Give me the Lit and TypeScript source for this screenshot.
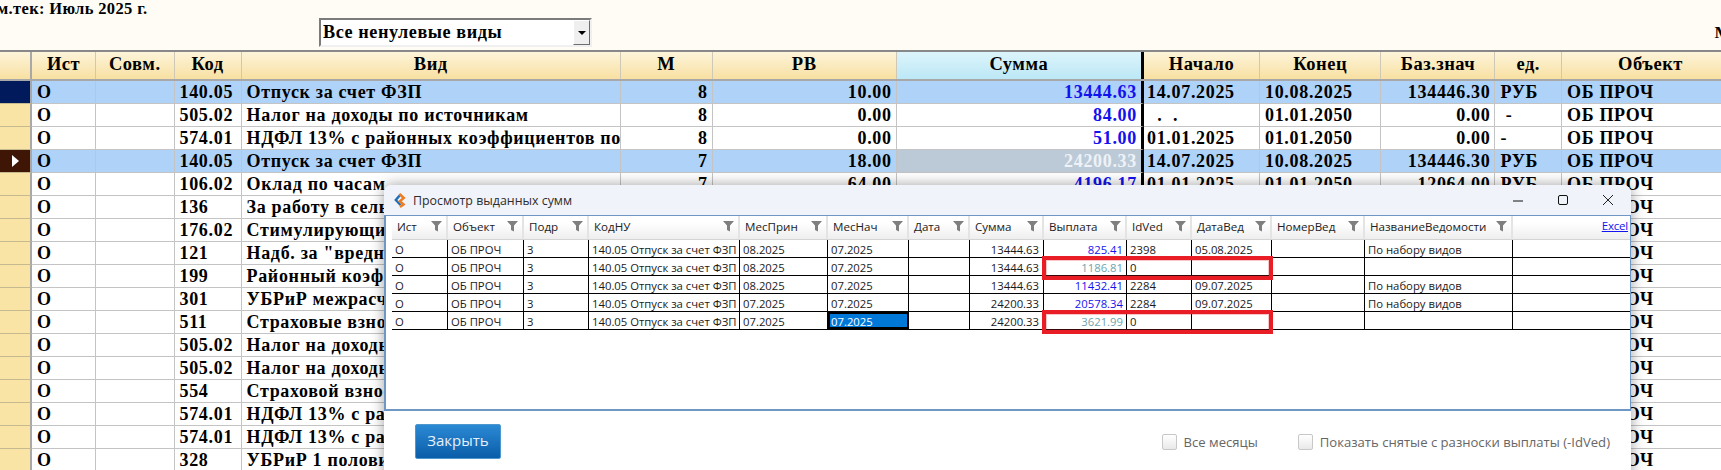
import { LitElement, html, css, svg } from "lit";
import { customElement } from "lit/decorators.js";

type MainRow = { ist: string; kod: string; vid: string; m: string; rv: string; sum: string; start: string; end: string; base: string; unit: string; obj: string; cls?: string; mark?: string };

const covered = (kod: string, vid: string): MainRow => ({
  ist: "О", kod, vid, m: "", rv: "", sum: "", start: "", end: "", base: "", unit: "", obj: "ОБ ПРОЧ",
});

const MAIN: MainRow[] = [
  { ist: "О", kod: "140.05", vid: "Отпуск за счет ФЗП", m: "8", rv: "10.00", sum: "13444.63", start: "14.07.2025", end: "10.08.2025", base: "134446.30", unit: "РУБ", obj: "ОБ ПРОЧ", cls: "sel", mark: "first" },
  { ist: "О", kod: "505.02", vid: "Налог на доходы по источникам", m: "8", rv: "0.00", sum: "84.00", start: "\u00a0\u00a0.\u00a0\u00a0.", end: "01.01.2050", base: "0.00", unit: "\u00a0-", obj: "ОБ ПРОЧ" },
  { ist: "О", kod: "574.01", vid: "НДФЛ 13% с районных коэффициентов по", m: "8", rv: "0.00", sum: "51.00", start: "01.01.2025", end: "01.01.2050", base: "0.00", unit: "-", obj: "ОБ ПРОЧ" },
  { ist: "О", kod: "140.05", vid: "Отпуск за счет ФЗП", m: "7", rv: "18.00", sum: "24200.33", start: "14.07.2025", end: "10.08.2025", base: "134446.30", unit: "РУБ", obj: "ОБ ПРОЧ", cls: "sel cur", mark: "cur" },
  { ist: "О", kod: "106.02", vid: "Оклад по часам", m: "7", rv: "64.00", sum: "4196.17", start: "01.01.2025", end: "01.01.2050", base: "12064.00", unit: "РУБ", obj: "ОБ ПРОЧ" },
  covered("136", "За работу в сель"),
  covered("176.02", "Стимулирующи"),
  covered("121", "Надб. за \"вредн"),
  covered("199", "Районный коэф"),
  covered("301", "УБРиР межрасч"),
  covered("511", "Страховые взно"),
  covered("505.02", "Налог на доходы"),
  covered("505.02", "Налог на доходы"),
  covered("554", "Страховой взнос"),
  covered("574.01", "НДФЛ 13% с рай"),
  covered("574.01", "НДФЛ 13% с рай"),
  covered("328", "УБРиР 1 полови"),
];

const HEAD = ["", "Ист", "Совм.", "Код", "Вид", "М", "РВ", "Сумма", "Начало", "Конец", "Баз.знач", "ед.", "Объект"];

const SUB_HEAD = ["Ист", "Объект", "Подр", "КодНУ", "МесПрин", "МесНач", "Дата", "Сумма", "Выплата", "IdVed", "ДатаВед", "НомерВед", "НазваниеВедомости", ""];

type SubRow = { pm: string; mn: string; sum: string; pay: string; grey?: boolean; id: string; date: string; name: string; active?: boolean };
const SUB: SubRow[] = [
  { pm: "08.2025", mn: "07.2025", sum: "13444.63", pay: "825.41", id: "2398", date: "05.08.2025", name: "По набору видов" },
  { pm: "08.2025", mn: "07.2025", sum: "13444.63", pay: "1186.81", grey: true, id: "0", date: "", name: "" },
  { pm: "08.2025", mn: "07.2025", sum: "13444.63", pay: "11432.41", id: "2284", date: "09.07.2025", name: "По набору видов" },
  { pm: "07.2025", mn: "07.2025", sum: "24200.33", pay: "20578.34", id: "2284", date: "09.07.2025", name: "По набору видов" },
  { pm: "07.2025", mn: "07.2025", sum: "24200.33", pay: "3621.99", grey: true, id: "0", date: "", name: "", active: true },
];

const funnel = svg`<path d="M0 0H11L7 4.5V10.5L4 9V4.5Z" fill="#7f7f7f"/>`;

@customElement("sub-grid")
class SubGrid extends LitElement {
  static styles = css`
    :host { display: block; font-family: "Open Sans", "Noto Sans", sans-serif; font-size: 11.3px; color: #1a1a1a; position: relative; }
    .line { display: grid; grid-template-columns: 56px 76px 65px 151px 88px 81px 61px 74px 83px 65px 80px 93px 148px 116px; }
    .head { height: 24px; background: linear-gradient(#ffffff 0 30%, #eeeeee 100%); border-bottom: 1px solid #d4d4d4; box-sizing: border-box; }
    .hc { display: flex; align-items: center; justify-content: space-between; padding: 0 4px 2px 5px; border-right: 2px solid #e4e4e4; font-size: 11.6px; color: #222; }
    .hc svg { width: 11px; height: 11px; flex: none; }
    .hc.blank { border-right: none; }
    .row { height: 18px; border-bottom: 1px solid #000; box-sizing: border-box; }
    .c { border-right: 1px solid #000; padding: 0 0 0 3px; line-height: 20px; white-space: nowrap; overflow: hidden; box-sizing: border-box; }
    .c:last-child { border-right: none; }
    .r { text-align: right; padding: 0 4px 0 0; }
    .pay { color: #1414ee; padding-right: 3px; }
    .pay.grey { color: #6da4ae; }
    .active { background: #0078d7; color: #fff; outline: 2px solid #000; outline-offset: -2px; }
  `;
  render() {
    return html`
      <div class="line head">
        ${SUB_HEAD.map((h) => h
          ? html`<div class="hc"><span>${h}</span><svg viewBox="0 0 11 11">${funnel}</svg></div>`
          : html`<div class="hc blank"></div>`)}
      </div>
      ${SUB.map((r) => html`
        <div class="line row">
          <div class="c">О</div><div class="c">ОБ ПРОЧ</div><div class="c">3</div>
          <div class="c">140.05 Отпуск за счет ФЗП</div>
          <div class="c">${r.pm}</div>
          <div class="c ${r.active ? "active" : ""}">${r.mn}</div>
          <div class="c"></div>
          <div class="c r">${r.sum}</div>
          <div class="c r pay ${r.grey ? "grey" : ""}">${r.pay}</div>
          <div class="c">${r.id}</div><div class="c">${r.date}</div><div class="c"></div>
          <div class="c">${r.name}</div><div class="c"></div>
        </div>`)}
    `;
  }
}

@customElement("app-root")
export class AppRoot extends LitElement {
  static styles = css`
    :host { display: block; width: 1721px; height: 470px; overflow: hidden; position: relative; background: #fffcf5; font-family: "Liberation Serif", "Times New Roman", serif; font-weight: bold; color: #000; }
    .top { height: 50px; box-sizing: border-box; display: grid; grid-template-rows: 18px 29px; }
    .period { font-size: 16.5px; line-height: 18px; margin-left: -3px; letter-spacing: 0.35px; }
    .tools { display: flex; align-items: center; justify-content: space-between; padding-left: 319px; white-space: nowrap; }
    .combo { width: 273px; height: 29px; box-sizing: border-box; border: 2px solid; border-color: #7b7b7b #f0f0f0 #f0f0f0 #7b7b7b; background: #fff; display: flex; align-items: stretch; justify-content: space-between; font-size: 18.2px; letter-spacing: 0.55px; }
    .combo span { padding-left: 2px; line-height: 25px; }
    .arrow { width: 17px; background: #efefef; border: 1px solid; border-color: #fff #6d6d6d #6d6d6d #fff; display: flex; align-items: center; justify-content: center; box-sizing: border-box; }
    .arrow i { border: 4px solid transparent; border-top: 4px solid #000; border-bottom: 0; display: block; }
    .cut { font-size: 17.5px; margin-right: -10px; }
    .sheet { border-top: 2px solid #888; width: 1740px; }
    .grid { display: grid; grid-template-columns: 32px 64px 78.5px 67px 379.5px 91.7px 184px 247.3px 116px 121.5px 114px 66.5px 178px; }
    .head { height: 29px; border-bottom: 2px solid #a8a8a8; box-sizing: border-box; font-size: 18.5px; letter-spacing: 0.5px; }
    .hc { background: linear-gradient(#fdf4da, #f8e0a2); border-right: 1px solid #cfc8b6; text-align: center; line-height: 25px; box-sizing: border-box; }
    .hc.sum { background: linear-gradient(#dcf4fb, #bce8f6); border-right: 3px solid #000; }
    .hc:first-child, .mark { border-right: 2px solid #a8a8a8; }
    .row { height: 23px; font-size: 18px; letter-spacing: 0.68px; background: #fff; }
    .row.sel { background: #aed2f8; }
    .c { border-right: 1px solid #c4c4c4; border-bottom: 1px solid #c4c4c4; padding: 0 5px; line-height: 22px; white-space: nowrap; overflow: hidden; box-sizing: border-box; min-width: 0; }
    .r { text-align: right; padding: 0 4px 0 0; }
    .c.first-date { padding-left: 3px; }
    .mark { background: #f9e3a5; border-bottom: 1px solid #c4b98f; box-sizing: border-box; display: flex; align-items: center; justify-content: center; }
    .mark.first { background: #001a5c; }
    .mark.cur { background: #3f1505; }
    .mark i { border: 6px solid transparent; border-left: 7px solid #fff; border-right: 0; display: block; }
    .sum { color: #1212ee; border-right: 3px solid #000; }
    .hc.sum { color: #000; }
    .row.cur .sum { background: #bccad8; color: #eef2f6; }
    .dialog { position: absolute; left: 384px; top: 185px; width: 1247px; height: 320px; background: #fff; border-radius: 8px 8px 0 0; box-shadow: 0 0 14px rgba(0,0,0,.38); font-family: "Open Sans", "Noto Sans", sans-serif; font-weight: normal; display: flex; flex-direction: column; }
    .title { height: 30px; background: #f1f3fa; border-radius: 8px 8px 0 0; display: flex; align-items: center; padding: 0 15px 0 10px; gap: 7px; font-size: 12.4px; color: #2d2d2d; flex: none; box-sizing: border-box; }
    .title .logo { width: 12px; height: 15px; flex: none; }
    .title .name { flex: 1; }
    .wb { display: flex; gap: 29px; align-items: center; }
    .wb svg { width: 16px; height: 16px; display: block; }
    .body { flex: none; height: 196px; border: 1px solid #6f97c4; border-width: 1px 1px 2px 2px; padding-left: 6px; box-sizing: border-box; position: relative; }
    .excel { position: absolute; right: 2px; top: 2px; font-size: 11.5px; line-height: 16px; color: #1414ee; text-decoration: underline; font-family: "Open Sans", sans-serif; letter-spacing: -0.2px; }
    .red { position: absolute; left: 655.5px; width: 231px; height: 24px; border: 4px solid #e91d25; box-sizing: border-box; box-shadow: inset 0 0 0 1px rgba(233,29,37,.25); pointer-events: none; }
    .red.a { top: 40px; }
    .red.b { top: 94px; }
    .foot { flex: none; display: flex; align-items: flex-start; justify-content: space-between; padding: 13px 21px 0 31px; }
    .btn { width: 86px; height: 35px; box-sizing: border-box; background: linear-gradient(#2c89d4, #0a5da9); border: 1px solid #4d97cf; border-radius: 2px; color: #e6f0fa; font-size: 15px; line-height: 31px; text-align: center; }
    .checks { display: flex; gap: 40px; padding-top: 9px; font-size: 13.1px; color: #666; }
    .chk { display: flex; align-items: center; gap: 7px; white-space: nowrap; }
    .chk i { width: 15px; height: 16px; box-sizing: border-box; border: 1px solid #c8c8c8; border-radius: 2px; background: linear-gradient(#fff, #e9e9e9); display: block; }
  `;

  render() {
    return html`
      <div class="top">
        <div class="period">м.тек: Июль 2025 г.</div>
        <div class="tools">
          <div class="combo"><span>Все ненулевые виды</span><div class="arrow"><i></i></div></div>
          <div class="cut">М</div>
        </div>
      </div>
      <div class="sheet">
        <div class="grid head">
          ${HEAD.map((h) => html`<div class="hc ${h === "Сумма" ? "sum" : ""}">${h}</div>`)}
        </div>
        ${MAIN.map((r) => html`
          <div class="grid row ${r.cls ?? ""}">
            <div class="mark ${r.mark ?? ""}">${r.mark === "cur" ? html`<i></i>` : ""}</div>
            <div class="c">${r.ist}</div><div class="c"></div>
            <div class="c">${r.kod}</div><div class="c">${r.vid}</div>
            <div class="c r">${r.m}</div><div class="c r">${r.rv}</div>
            <div class="c r sum">${r.sum}</div>
            <div class="c first-date">${r.start}</div><div class="c">${r.end}</div>
            <div class="c r">${r.base}</div><div class="c">${r.unit}</div><div class="c">${r.obj}</div>
          </div>`)}
      </div>
      <div class="dialog">
        <div class="title">
          <svg class="logo" viewBox="0 0 12 15" fill="none" stroke-width="2.4">
            <path d="M6.5 1.5 L1.8 7 L6.5 12" stroke="#1f6fb8"/>
            <path d="M5.5 1 L9.8 5 L5.8 8.2 L9.6 11.5 L6 14" stroke="#ee7d22"/>
          </svg>
          <span class="name">Просмотр выданных сумм</span>
          <div class="wb">
            <svg viewBox="0 0 16 16"><path d="M3 9H13" stroke="#111" stroke-width="1"/></svg>
            <svg viewBox="0 0 16 16"><rect x="3.5" y="3.5" width="9" height="9" rx="1.5" fill="none" stroke="#111"/></svg>
            <svg viewBox="0 0 16 16"><path d="M3 3L13 13M13 3L3 13" stroke="#222" stroke-width="1"/></svg>
          </div>
        </div>
        <div class="body">
          <sub-grid></sub-grid>
          <span class="excel">Excel</span>
          <div class="red a"></div>
          <div class="red b"></div>
        </div>
        <div class="foot">
          <div class="btn">Закрыть</div>
          <div class="checks">
            <label class="chk"><i></i>Все месяцы</label>
            <label class="chk"><i></i>Показать снятые с разноски выплаты (-IdVed)</label>
          </div>
        </div>
      </div>
    `;
  }
}
